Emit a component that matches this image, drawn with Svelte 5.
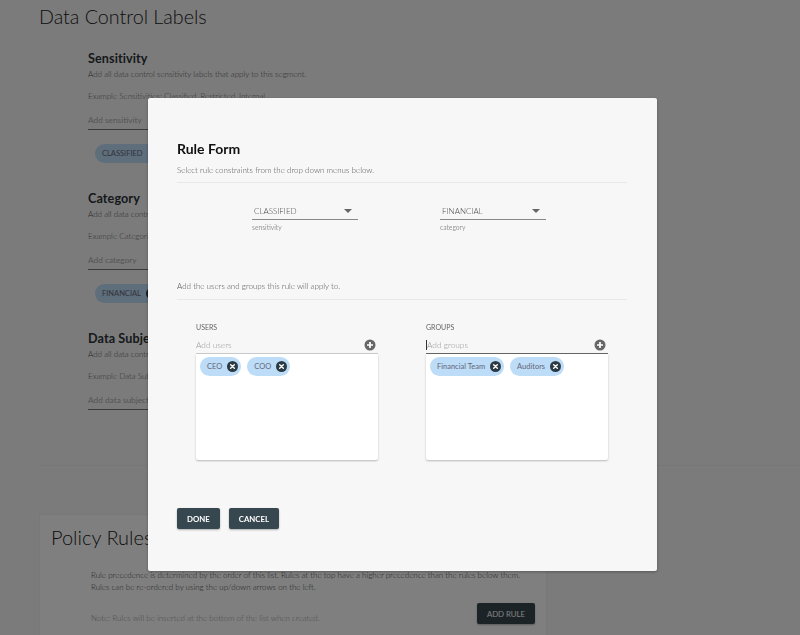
<script lang="ts">
  const labelSections = [
    {
      title: 'Sensitivity',
      desc: 'Add all data control sensitivity labels that apply to this segment.',
      example: 'Example Sensitivities: Classified, Restricted, Internal',
      placeholder: 'Add sensitivity',
      chip: 'CLASSIFIED'
    },
    {
      title: 'Category',
      desc: 'Add all data control category labels that apply to this segment.',
      example: 'Example Categories: Financial, Medical, Personal',
      placeholder: 'Add category',
      chip: 'FINANCIAL'
    },
    {
      title: 'Data Subject',
      desc: 'Add all data control data subject labels that apply to this segment.',
      example: 'Example Data Subjects: Customer, Employee, Partner',
      placeholder: 'Add data subject',
      chip: ''
    }
  ];

  const selects = [
    { value: 'CLASSIFIED', hint: 'sensitivity' },
    { value: 'FINANCIAL', hint: 'category' }
  ];

  const pickers = [
    { label: 'USERS', placeholder: 'Add users', chips: ['CEO', 'COO'], focused: false },
    { label: 'GROUPS', placeholder: 'Add groups', chips: ['Financial Team', 'Auditors'], focused: true }
  ];
</script>

{#snippet removeIcon()}
  <svg class="remove" viewBox="0 0 12 12" aria-hidden="true">
    <circle cx="6" cy="6" r="6" fill="#2c3a44" />
    <path d="M4 4l4 4M8 4l-4 4" stroke="#fff" stroke-width="1.5" stroke-linecap="round" />
  </svg>
{/snippet}

<div class="page">
  <h1>Data Control Labels</h1>

  {#each labelSections as s}
    <section class="label-section">
      <h2>{s.title}</h2>
      <p class="desc">{s.desc}</p>
      <p class="example">{s.example}</p>
      <div class="field">{s.placeholder}</div>
      {#if s.chip}
        <span class="chip page-chip">{s.chip} {@render removeIcon()}</span>
      {/if}
    </section>
  {/each}

  <hr class="page-rule" />

  <div class="policy-card">
    <h1 class="policy-title">Policy Rules</h1>
    <div class="policy-body">
      <p>Rule precedence is determined by the order of this list. Rules at the top have a higher precedence than the rules below them.</p>
      <p>Rules can be re-ordered by using the up/down arrows on the left.</p>
      <div class="policy-foot">
        <p class="note">Note: Rules will be inserted at the bottom of the list when created.</p>
        <button type="button" class="btn add-rule">ADD RULE</button>
      </div>
    </div>
  </div>
</div>

<div class="overlay"></div>

<div class="modal" role="dialog" aria-label="Rule Form">
  <h3>Rule Form</h3>
  <p class="modal-text">Select rule constraints from the drop down menus below.</p>

  <div class="select-row">
    {#each selects as sel}
      <div class="select-wrap">
        <div class="select">
          <span>{sel.value}</span>
          <i class="caret"></i>
        </div>
        <div class="hint">{sel.hint}</div>
      </div>
    {/each}
  </div>

  <p class="modal-text second">Add the users and groups this rule will apply to.</p>

  <div class="picker-row">
    {#each pickers as p}
      <div class="picker">
        <div class="picker-label">{p.label}</div>
        <div class="picker-input" class:focused={p.focused}>
          <span>{p.placeholder}</span>
          <svg class="add" viewBox="0 0 12 12" aria-hidden="true">
            <circle cx="6" cy="6" r="5.5" fill="#666" />
            <path d="M6 3v6M3 6h6" stroke="#fff" stroke-width="1.7" />
          </svg>
        </div>
        <div class="chip-box">
          {#each p.chips as c}
            <span class="chip">{c} {@render removeIcon()}</span>
          {/each}
        </div>
      </div>
    {/each}
  </div>

  <div class="actions">
    <button type="button" class="btn">DONE</button>
    <button type="button" class="btn">CANCEL</button>
  </div>
</div>

<style>
  :global(body) {
    background: #f7f7f7;
    font-family: Lato, "Open Sans", sans-serif;
    color: #333;
    overflow: hidden;
  }
  p, h1, h2, h3 {
    margin: 0;
  }
  .page {
    height: 635px;
    overflow: hidden;
    padding: 5px 0 0 39px;
    box-sizing: border-box;
  }
  h1 {
    font-size: 19.7px;
    font-weight: 300;
    line-height: 24px;
    color: #222;
  }
  .label-section {
    padding-left: 49px;
    width: 400px;
    height: 140px;
  }
  .label-section:first-of-type {
    margin-top: 21px;
  }
  .label-section:last-of-type {
    height: 135px;
  }
  h2 {
    font-size: 12.6px;
    font-weight: 700;
    line-height: 18px;
    color: #2c3338;
    letter-spacing: 0.1px;
  }
  .desc, .example {
    font-size: 8px;
    font-weight: 300;
    line-height: 12px;
    color: #555;
  }
  .example {
    color: #666;
    margin-top: 10px;
  }
  .field {
    width: 200px;
    margin-top: 10px;
    padding: 2px 0 3px;
    font-size: 8.3px;
    line-height: 12px;
    color: #aaa;
    border-bottom: 1px solid #777;
  }
  .chip {
    display: inline-flex;
    align-items: center;
    gap: 5px;
    height: 19px;
    padding: 0 3px 0 7px;
    border-radius: 10px;
    background: #bcdcf7;
    font-size: 7.5px;
    color: #667;
    white-space: nowrap;
  }
  .page-chip {
    margin: 14px 0 0 7px;
  }
  .remove {
    width: 11px;
    height: 11px;
    flex: none;
  }
  .page-rule {
    border: 0;
    border-top: 1px solid #ececec;
    margin: 0;
  }
  .policy-card {
    width: 508px;
    height: 200px;
    margin-top: 48px;
    padding: 10px 11px;
    box-sizing: border-box;
    background: #fff;
    border: 1px solid #f0f0f0;
  }
  .policy-title {
    font-size: 20px;
  }
  .policy-body {
    margin: 20px 0 0 40px;
    font-size: 8px;
    font-weight: 300;
    line-height: 12px;
    color: #444;
    white-space: nowrap;
  }
  .policy-foot {
    display: flex;
    justify-content: space-between;
    align-items: flex-start;
    margin-top: 10px;
  }
  .note {
    margin-top: 9px;
    color: #999;
  }
  .overlay {
    position: fixed;
    inset: 0;
    background: rgba(0, 0, 0, 0.5);
  }
  .modal {
    position: fixed;
    left: 148px;
    top: 98px;
    width: 509px;
    height: 473px;
    box-sizing: border-box;
    padding: 42px 30px 0 29px;
    background: #f7f7f7;
    border-radius: 2px;
    box-shadow: 0 1px 3px rgba(0, 0, 0, 0.3);
  }
  h3 {
    font-size: 14px;
    font-weight: 700;
    line-height: 18px;
    color: #111;
  }
  .modal-text {
    font-size: 8px;
    font-weight: 300;
    line-height: 12px;
    color: #555;
    margin-top: 6px;
    padding-bottom: 6px;
    border-bottom: 1px solid #e8e8e8;
  }
  .modal-text.second {
    margin-top: 0;
    padding-bottom: 7px;
  }
  .select-row {
    display: flex;
    gap: 82px;
    padding: 21px 0 0 75px;
    height: 97px;
    box-sizing: border-box;
  }
  .select-wrap {
    width: 106px;
  }
  .select {
    display: flex;
    justify-content: space-between;
    align-items: center;
    height: 13px;
    padding: 0 2px 2px;
    border-bottom: 1px solid #888;
    font-size: 8px;
    font-weight: 300;
    color: #444;
  }
  .caret {
    width: 0;
    height: 0;
    margin-right: 4px;
    border-left: 4px solid transparent;
    border-right: 4px solid transparent;
    border-top: 4px solid #666;
  }
  .hint {
    font-size: 6.7px;
    line-height: 10px;
    margin-top: 2px;
    color: #999;
  }
  .picker-row {
    display: flex;
    gap: 48px;
    padding: 22px 0 0 19px;
  }
  .picker {
    width: 182px;
  }
  .picker-label {
    font-size: 7px;
    line-height: 10px;
    color: #666;
  }
  .picker-input {
    display: flex;
    justify-content: space-between;
    align-items: center;
    height: 16px;
    margin-top: 5px;
    padding-right: 2px;
    font-size: 8.3px;
    font-weight: 300;
    color: #999;
    border-bottom: 1px solid #ccc;
  }
  .picker-input.focused {
    border-bottom: 1px solid #666;
  }
  .picker-input.focused span {
    border-left: 1px solid #333;
  }
  .add {
    width: 12px;
    height: 12px;
  }
  .chip-box {
    display: flex;
    align-items: flex-start;
    gap: 6px;
    height: 106px;
    box-sizing: border-box;
    padding: 3px 4px;
    background: #fff;
    border-radius: 0 0 2px 2px;
    box-shadow: 0 1px 2px rgba(0, 0, 0, 0.25);
  }
  .actions {
    display: flex;
    gap: 9px;
    margin-top: 48px;
  }
  .btn {
    height: 21px;
    padding: 0 10px;
    border: 0;
    border-radius: 2px;
    background: #37474f;
    color: #fff;
    font-family: inherit;
    font-size: 7.8px;
    font-weight: 700;
    box-shadow: 0 1px 2px rgba(0, 0, 0, 0.3);
  }
  .add-rule {
    width: 58px;
    padding: 0;
    font-weight: 400;
  }
</style>
